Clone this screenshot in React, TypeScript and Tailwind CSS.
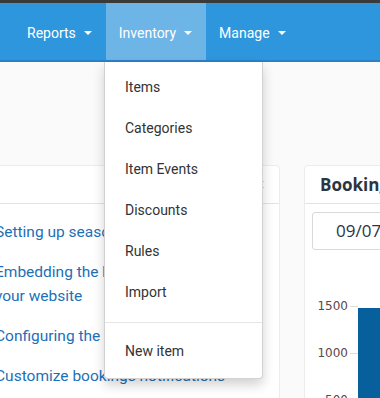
import { X } from "lucide-react";

const menu = ["Items", "Categories", "Item Events", "Discounts", "Rules", "Import"];

function Caret() {
  return (
    <svg width="8" height="4" viewBox="0 0 8 4" className="ml-[8px]">
      <path d="M0 0 L8 0 L4 4 Z" fill="currentColor" />
    </svg>
  );
}

function NavItem({ label, active }: { label: string; active?: boolean }) {
  return (
    <div
      className={`flex items-center h-full pt-[3px] pl-[13px] pr-[14px] ${active ? "bg-[#6db4e7]" : ""}`}
    >
      <span>{label}</span>
      <Caret />
    </div>
  );
}

export default function App() {
  return (
    <div className="relative w-[380px] h-[398px] overflow-hidden bg-[#fafafa] font-['Roboto',sans-serif]">
      <div className="h-[3px] bg-[#3a3a3a]" />
      <nav className="flex h-[59px] pl-[14px] bg-[#2d96dd] border-b-2 border-[#2a80c6] text-white text-[14px]">
        <NavItem label="Reports" />
        <NavItem label="Inventory" active />
        <NavItem label="Manage" />
      </nav>

      <div className="flex gap-[24px] mt-[103px] -ml-[19px]">
        <div className="w-[299px] shrink-0 h-[300px] bg-white rounded-[4px] border border-[#ececec]">
          <div className="h-[38px] border-b border-[#e3e3e3] flex items-center justify-end pr-[13px]">
            <X size={11} className="text-[#999]" strokeWidth={2} />
          </div>
          <div className="flex flex-col gap-[16px] pt-[16px] pl-[13px] text-[15.5px] leading-[24px] text-[#1d70b7]">
            <span>Setting up seasonal prices</span>
            <span>
              Embedding the booking form on
              <br />
              your website
            </span>
            <span>Configuring the payment gateway</span>
            <span>Customize bookings notifications</span>
          </div>
        </div>

        <div className="w-[200px] shrink-0 h-[300px] bg-white rounded-[4px] border border-[#ececec]">
          <div className="h-[38px] border-b border-[#e3e3e3] flex items-center pl-[15px] font-['Open_Sans',sans-serif] font-bold text-[17px] text-[#2b3440]">
            Bookings overview
          </div>
          <div className="mt-[8px] ml-[7px] h-[38px] border border-[#d9d9d9] rounded-[3px] flex items-center pl-[23px] font-['Open_Sans',sans-serif] text-[17px] text-[#2b3440]">
            09/07/2024
          </div>
          <div className="relative mt-[49px]">
            <div className="flex flex-col gap-[32px] w-[43px] items-end font-['DejaVu_Sans',sans-serif] text-[12px] leading-[15px] text-[#5c4848]">
              <div>1500</div>
              <div>1000</div>
              <div>500</div>
            </div>
            <div className="absolute left-[45px] top-[7px] w-[8px] h-px bg-[#ddd]" />
            <div className="absolute left-[45px] top-[54px] w-[8px] h-px bg-[#ddd]" />
            <div className="absolute left-[53px] top-[9px] w-[40px] h-[120px] bg-[#07609c]" />
          </div>
        </div>
      </div>

      <div className="absolute left-[104px] top-[62px] w-[159px] h-[317px] bg-white rounded-b-[4px] border border-t-0 border-[#d2d2d2] shadow-[0_6px_12px_rgba(0,0,0,0.18)] pt-[5px] text-[14px] text-[#333]">
        {menu.map((m) => (
          <div key={m} className="h-[41px] flex items-center pl-[20px]">
            {m}
          </div>
        ))}
        <div className="mt-[9px] h-px bg-[#e5e5e5]" />
        <div className="mt-[8px] h-[41px] flex items-center pl-[20px]">New item</div>
      </div>
    </div>
  );
}
